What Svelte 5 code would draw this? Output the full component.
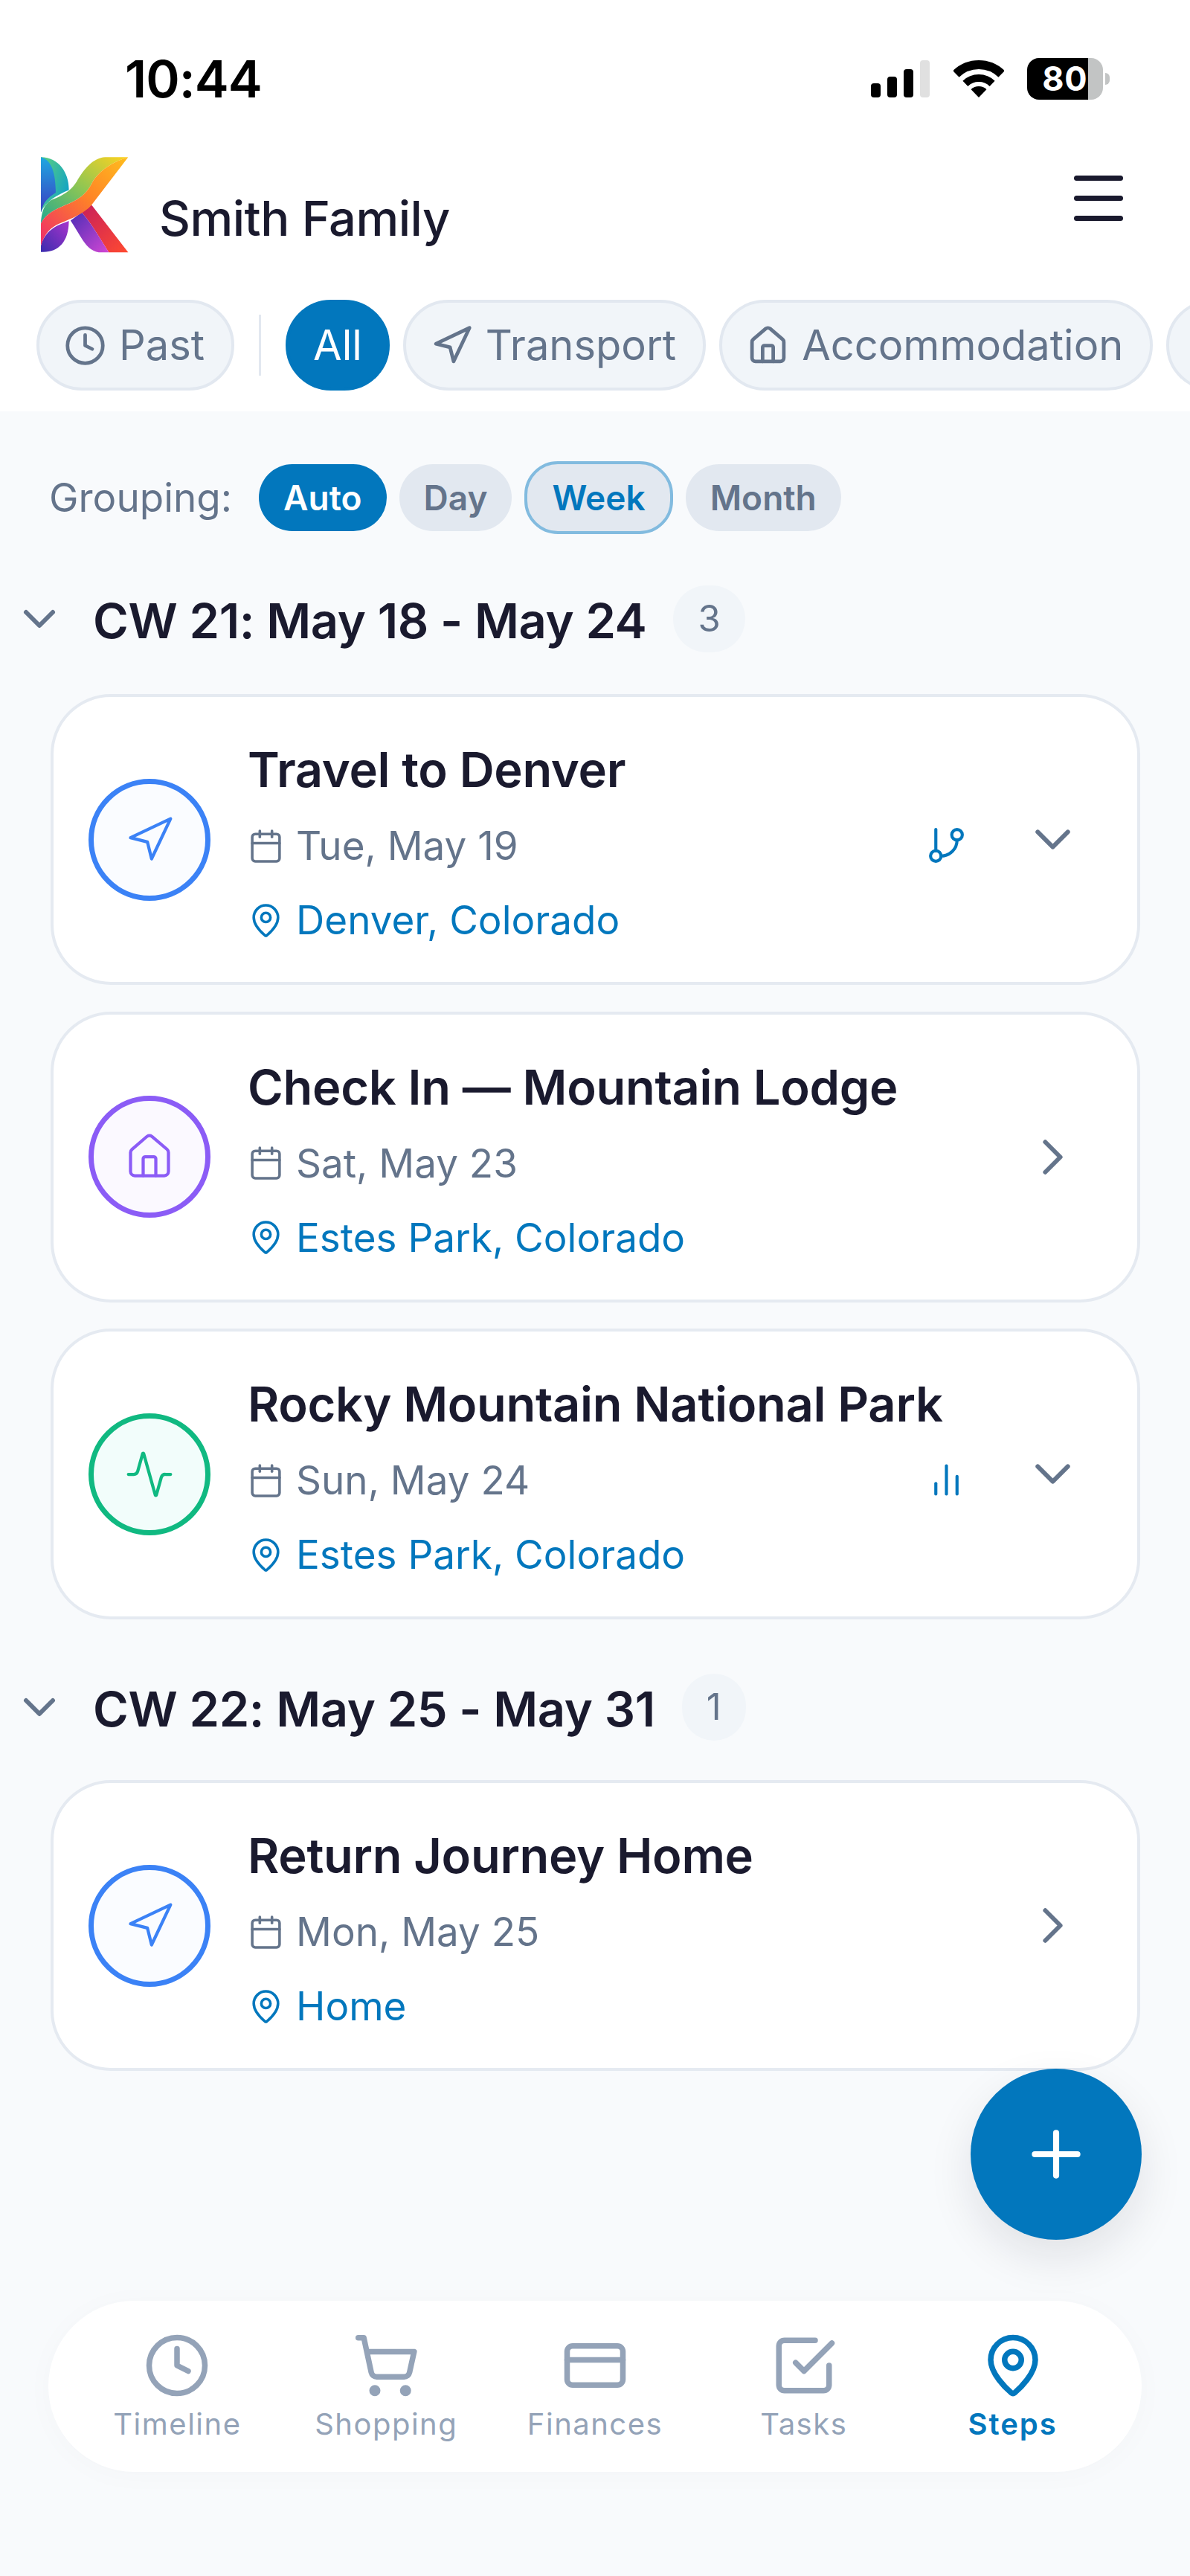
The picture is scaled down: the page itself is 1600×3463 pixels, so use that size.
<script>
  const ic = {
    clock: '<circle cx="12" cy="12" r="10"/><polyline points="12 6 12 12 16 14"/>',
    nav: '<polygon points="3 11 22 2 13 21 11 13 3 11"/>',
    house: '<path d="M15 21v-8a1 1 0 0 0-1-1h-4a1 1 0 0 0-1 1v8"/><path d="M3 10a2 2 0 0 1 .709-1.528l7-5.999a2 2 0 0 1 2.582 0l7 5.999A2 2 0 0 1 21 10v9a2 2 0 0 1-2 2H5a2 2 0 0 1-2-2z"/>',
    calendar: '<path d="M8 2v4"/><path d="M16 2v4"/><rect x="3" y="4" width="18" height="18" rx="2"/><path d="M3 10h18"/>',
    pin: '<path d="M20 10c0 4.993-5.539 10.193-7.399 11.799a1 1 0 0 1-1.202 0C9.539 20.193 4 14.993 4 10a8 8 0 0 1 16 0"/><circle cx="12" cy="10" r="3"/>',
    branch: '<line x1="6" x2="6" y1="3" y2="15"/><circle cx="18" cy="6" r="3"/><circle cx="6" cy="18" r="3"/><path d="M18 9a9 9 0 0 1-9 9"/>',
    bars: '<line x1="18" x2="18" y1="20" y2="10"/><line x1="12" x2="12" y1="20" y2="4"/><line x1="6" x2="6" y1="20" y2="14"/>',
    activity: '<path d="M22 12h-2.48a2 2 0 0 0-1.93 1.46l-2.35 8.36a.25.25 0 0 1-.48 0L9.24 2.18a.25.25 0 0 0-.48 0l-2.35 8.36A2 2 0 0 1 4.49 12H2"/>',
    down: '<path d="m6 9 6 6 6-6"/>',
    right: '<path d="m9 18 6-6-6-6"/>',
    plus: '<path d="M5 12h14"/><path d="M12 5v14"/>',
    cart: '<circle cx="8" cy="21" r="1"/><circle cx="19" cy="21" r="1"/><path d="M2.05 2.05h2l2.66 12.42a2 2 0 0 0 2 1.58h9.78a2 2 0 0 0 1.95-1.57l1.65-7.43H5.12"/>',
    card: '<rect x="2" y="5" width="20" height="14" rx="2"/><line x1="2" x2="22" y1="10" y2="10"/>',
    check: '<path d="M9 11l3 3L22 4"/><path d="M21 12v7a2 2 0 0 1-2 2H5a2 2 0 0 1-2-2V5a2 2 0 0 1 2-2h11"/>'
  }

  // the last pill runs off the screen, only its left edge shows
  const filters = [
    { label: 'Transport', icon: 'nav' },
    { label: 'Accommodation', icon: 'house' },
    { label: '', icon: 'activity' }
  ]

  const groupings = ['Auto', 'Day', 'Week', 'Month']

  const sections = [
    {
      title: 'CW 21: May 18 - May 24',
      count: 3,
      steps: [
        { title: 'Travel to Denver', date: 'Tue, May 19', place: 'Denver, Colorado', icon: 'nav', tone: 'blue', extra: 'branch', open: true },
        { title: 'Check In — Mountain Lodge', date: 'Sat, May 23', place: 'Estes Park, Colorado', icon: 'house', tone: 'purple' },
        { title: 'Rocky Mountain National Park', date: 'Sun, May 24', place: 'Estes Park, Colorado', icon: 'activity', tone: 'green', extra: 'bars', open: true }
      ]
    },
    {
      title: 'CW 22: May 25 - May 31',
      count: 1,
      steps: [
        { title: 'Return Journey Home', date: 'Mon, May 25', place: 'Home', icon: 'nav', tone: 'blue' }
      ]
    }
  ]

  const tabs = [
    { label: 'Timeline', icon: 'clock' },
    { label: 'Shopping', icon: 'cart' },
    { label: 'Finances', icon: 'card' },
    { label: 'Tasks', icon: 'check' },
    { label: 'Steps', icon: 'pin', active: true }
  ]
</script>

{#snippet icon(name, size, sw = 2)}
  <svg class="ico" width={size} height={size} viewBox="0 0 24 24" fill="none" stroke="currentColor" stroke-width={sw} stroke-linecap="round" stroke-linejoin="round">{@html ic[name]}</svg>
{/snippet}

<div class="page">
  <header class="top">
    <div class="status">
      <span class="time">10:44</span>
      <div class="signal"><i class="b1"></i><i class="b2"></i><i class="b3"></i><i class="b4"></i></div>
      <svg class="wifi" width="68" height="50" viewBox="0 0 68 50">
        <path d="M3.4 18.4A44 44 0 0 1 64.6 18.4" fill="none" stroke="#000" stroke-width="12" />
        <path d="M15.9 31.3A26 26 0 0 1 52.1 31.3" fill="none" stroke="#000" stroke-width="10" />
        <path d="M23.6 39.2A15 15 0 0 1 44.4 39.2L34 50Z" fill="#000" />
      </svg>
      <div class="battery"><span class="level">80</span><span class="rest"></span></div>
      <span class="nub"></span>
    </div>

    <div class="brand">
      <svg class="logo" width="122" height="133" viewBox="70 55 365 400">
        <defs>
          <linearGradient id="k1" x1="0" y1="0" x2="1" y2="0.6"><stop offset="0" stop-color="#5fd27c" /><stop offset="1" stop-color="#12a3c4" /></linearGradient>
          <linearGradient id="k2" x1="0" y1="0" x2="0" y2="1"><stop offset="0" stop-color="#1fa8e0" /><stop offset="1" stop-color="#3a3ec2" /></linearGradient>
          <linearGradient id="k3" x1="0" y1="1" x2="1" y2="0"><stop offset="0" stop-color="#22a890" /><stop offset="0.5" stop-color="#8ec653" /><stop offset="1" stop-color="#ffd21f" /></linearGradient>
          <linearGradient id="k4" x1="0" y1="1" x2="1" y2="0"><stop offset="0" stop-color="#ee2c6a" /><stop offset="0.55" stop-color="#ff8426" /><stop offset="1" stop-color="#ffbe1e" /></linearGradient>
          <linearGradient id="k5" x1="0" y1="1" x2="1" y2="0"><stop offset="0" stop-color="#3a2cae" /><stop offset="1" stop-color="#a834cc" /></linearGradient>
          <linearGradient id="k6" x1="0" y1="0" x2="1" y2="1"><stop offset="0" stop-color="#4c2db6" /><stop offset="1" stop-color="#d247d4" /></linearGradient>
          <linearGradient id="k7" x1="0" y1="0" x2="1" y2="1"><stop offset="0" stop-color="#c81f5c" /><stop offset="1" stop-color="#ff4a30" /></linearGradient>
        </defs>
        <path d="M75 62C150 62 190 130 188 195C140 215 95 240 75 285Z" fill="url(#k1)" />
        <path d="M75 62C110 70 135 110 135 205C105 225 85 240 75 285Z" fill="url(#k2)" />
        <path d="M75 445C140 450 188 410 188 320C150 335 95 350 75 420Z" fill="url(#k5)" />
        <path d="M240 285L280 255L428 447H350C320 400 280 330 240 285Z" fill="url(#k7)" />
        <path d="M195 318L240 285C280 330 320 400 350 447H320C260 447 240 385 195 318Z" fill="url(#k6)" />
        <path d="M428 62H335C285 65 250 110 220 160C195 200 165 215 125 232C95 245 78 270 75 330C95 290 130 275 175 255C225 235 255 215 280 170C300 130 350 85 428 62Z" fill="url(#k3)" />
        <path d="M428 62C350 85 300 130 280 170C255 215 225 235 175 255C130 275 95 290 75 330V420C90 370 115 345 150 330C200 310 250 290 280 255Z" fill="url(#k4)" />
      </svg>
      <span class="family">Smith Family</span>
      <div class="burger"><i></i><i></i><i></i></div>
    </div>

    <div class="filters">
      <span class="pill">{@render icon('clock', 57)}Past</span>
      <span class="sep"></span>
      <span class="pill on">All</span>
      {#each filters as f}
        <span class="pill">{@render icon(f.icon, 57)}{f.label}</span>
      {/each}
    </div>
  </header>

  <main class="content">
    <div class="grouping">
      <span class="glabel">Grouping:</span>
      {#each groupings as g}
        <span class="gpill" class:auto={g === 'Auto'} class:week={g === 'Week'}>{g}</span>
      {/each}
    </div>

    {#each sections as s}
      <section class="section">
        <div class="shead">
          <span class="schev">{@render icon('down', 72, 2)}</span>
          <h2>{s.title}</h2>
          <span class="count">{s.count}</span>
        </div>
        <div class="cards">
          {#each s.steps as st}
            <article class="card">
              <div class="disc {st.tone}">{@render icon(st.icon, 68, 1.5)}</div>
              <div class="body">
                <div class="title">{st.title}</div>
                <div class="row date">{@render icon('calendar', 49, 1.75)}<span>{st.date}</span></div>
                <div class="row place">{@render icon('pin', 49, 1.75)}<span>{st.place}</span></div>
              </div>
              <div class="actions">
                {#if st.extra}
                  <span class="extra">{@render icon(st.extra, 57, 1.75)}</span>
                {/if}
                <span class="chev">{@render icon(st.open ? 'down' : 'right', 81, 1.75)}</span>
              </div>
            </article>
          {/each}
        </div>
      </section>
    {/each}

    <button class="fab" aria-label="Add">{@render icon('plus', 98, 2)}</button>

    <nav class="tabs">
      {#each tabs as t}
        <div class="tab" class:active={t.active}>
          {@render icon(t.icon, 90, 2)}
          <span>{t.label}</span>
        </div>
      {/each}
    </nav>
  </main>
</div>

<style>
  :global(body) {
    margin: 0;
    background: #f8fafc;
  }

  .page {
    width: 1600px;
    height: 3463px;
    display: flex;
    flex-direction: column;
    overflow: hidden;
    font-family: Inter, "Liberation Sans", sans-serif;
    color: #1a1a2e;
  }

  .ico {
    display: block;
    flex: none;
  }

  .top {
    background: #fff;
    height: 553px;
    box-sizing: border-box;
  }

  .status {
    height: 211px;
    display: flex;
    align-items: center;
  }

  .time {
    margin-left: 168px;
    font-size: 69px;
    font-weight: 600;
    color: #000;
    letter-spacing: -1px;
    margin-right: auto;
  }

  .signal {
    display: flex;
    align-items: flex-end;
    gap: 9px;
    height: 50px;
  }
  .signal i {
    width: 13px;
    background: #000;
    border-radius: 4px;
  }
  .signal .b1 { height: 19px; }
  .signal .b2 { height: 28px; }
  .signal .b3 { height: 38px; }
  .signal .b4 { height: 50px; background: #e0e0e0; }

  .wifi {
    margin-left: 32px;
    margin-right: 31px;
  }

  .battery {
    width: 102px;
    height: 56px;
    border-radius: 16px;
    overflow: hidden;
    display: flex;
  }
  .level {
    width: 82px;
    background: #000;
    color: #fff;
    font-size: 45px;
    font-weight: 700;
    line-height: 56px;
    text-align: right;
    padding-right: 1px;
    box-sizing: border-box;
    letter-spacing: 0.5px;
  }
  .rest {
    flex: 1;
    background: #c2c4c4;
  }
  .nub {
    width: 6px;
    height: 16px;
    margin-left: 3px;
    margin-right: 108px;
    background: #c2c4c4;
    border-radius: 0 8px 8px 0;
  }

  .brand {
    height: 192px;
    display: flex;
    align-items: flex-start;
    box-sizing: border-box;
    padding-left: 53px;
  }
  .logo {
    margin-top: -2px;
  }
  .family {
    margin-left: 39px;
    margin-top: 44px;
    font-size: 65px;
    font-weight: 500;
    line-height: 78px;
    letter-spacing: -0.5px;
    color: #1a1a2e;
  }
  .burger {
    margin-left: auto;
    margin-right: 90px;
    margin-top: 25px;
    display: flex;
    flex-direction: column;
    gap: 20px;
  }
  .burger i {
    display: block;
    width: 66px;
    height: 7px;
    border-radius: 4px;
    background: #1a1a2e;
  }

  .filters {
    display: flex;
    align-items: center;
    gap: 18px;
    padding-left: 49px;
    height: 122px;
    width: 1600px;
    box-sizing: border-box;
    overflow: hidden;
  }
  .pill {
    flex: none;
    height: 122px;
    box-sizing: border-box;
    display: flex;
    align-items: center;
    gap: 17px;
    padding: 0 36px 0 33px;
    border: 4px solid #e2e8f0;
    border-radius: 61px;
    background: #f1f5f9;
    color: #64748b;
    font-size: 56px;
    white-space: nowrap;
  }
  .pill.on {
    background: #0277bd;
    border-color: #0277bd;
    color: #fff;
    padding: 0 33px;
  }
  .sep {
    flex: none;
    width: 3px;
    height: 82px;
    margin: 0 15px;
    background: #e2e8f0;
  }

  .content {
    flex: 1;
    display: flex;
    flex-direction: column;
    position: relative;
  }

  .grouping {
    display: flex;
    align-items: center;
    gap: 17px;
    height: 98px;
    margin-top: 67px;
    padding-left: 66px;
  }
  .glabel {
    font-size: 53px;
    color: #64748b;
    margin-right: 19px;
  }
  .gpill {
    height: 90px;
    line-height: 90px;
    padding: 0 33px;
    border-radius: 45px;
    background: #e2e8f0;
    color: #64748b;
    font-size: 46px;
    font-weight: 600;
  }
  .gpill.auto {
    background: #0277bd;
    color: #fff;
  }
  .gpill.week {
    height: 98px;
    line-height: 90px;
    box-sizing: border-box;
    border: 4px solid #82bbdf;
    color: #0277bd;
  }

  .section {
    margin-top: 69px;
  }
  .section + .section {
    margin-top: 73px;
  }

  .shead {
    display: flex;
    align-items: center;
    height: 90px;
    padding-left: 17px;
    margin-bottom: 56px;
  }
  .section + .section .shead {
    margin-bottom: 53px;
  }
  .schev {
    color: #64748b;
    margin-right: 36px;
  }
  h2 {
    margin: 6px 0 0;
    font-size: 65px;
    font-weight: 600;
    line-height: 78px;
    letter-spacing: -0.35px;
    color: #1a1a2e;
  }
  .count {
    margin-left: 36px;
    padding: 0 33px;
    height: 90px;
    border-radius: 45px;
    background: #f1f5f9;
    color: #64748b;
    font-size: 49px;
    line-height: 90px;
    text-align: center;
  }

  .cards {
    display: flex;
    flex-direction: column;
    gap: 35.5px;
    margin: 0 67px 0 68px;
  }
  .card {
    height: 391px;
    box-sizing: border-box;
    display: flex;
    align-items: center;
    padding: 0 73px 0 47px;
    border: 4px solid #e5eaf1;
    border-radius: 81px;
    background: #fff;
  }
  .disc {
    width: 164px;
    height: 164px;
    box-sizing: border-box;
    border: 7px solid;
    border-radius: 50%;
    display: flex;
    align-items: center;
    justify-content: center;
    flex: none;
  }
  .disc.blue { color: #3b82f6; background: #fafcff; }
  .disc.purple { color: #8b5cf6; background: #fbf9ff; }
  .disc.green { color: #10b981; background: #f2fdfb; }

  .body {
    flex: 1;
    min-width: 0;
    margin-left: 50px;
    padding-top: 17px;
  }
  .title {
    height: 100px;
    line-height: 96px;
    font-size: 65px;
    font-weight: 600;
    letter-spacing: -0.3px;
    color: #1a1a2e;
    white-space: nowrap;
  }
  .row {
    height: 100px;
    display: flex;
    align-items: center;
    gap: 16px;
    font-size: 53px;
  }
  .date { color: #64748b; }
  .place { color: #0277bd; }

  .actions {
    flex: none;
    display: flex;
    align-items: center;
    gap: 74px;
  }
  .extra {
    color: #0277bd;
    margin-top: 15px;
  }
  .chev {
    color: #64748b;
  }

  .fab {
    position: absolute;
    right: 65px;
    bottom: 452px;
    width: 230px;
    height: 230px;
    padding: 0;
    border: 0;
    border-radius: 50%;
    background: #0277bd;
    color: #fff;
    display: flex;
    align-items: center;
    justify-content: center;
    box-shadow: 0 24px 60px rgba(15, 23, 42, 0.1);
  }

  .tabs {
    margin: auto 65px 140px;
    height: 230px;
    box-sizing: border-box;
    padding: 42px 33px 0;
    display: grid;
    grid-template-columns: repeat(5, 1fr);
    border-radius: 115px;
    background: #fff;
    box-shadow: 0 4px 40px rgba(15, 23, 42, 0.025);
  }
  .tab {
    display: flex;
    flex-direction: column;
    align-items: center;
    color: #94a3b8;
    font-size: 40px;
    letter-spacing: 1.5px;
    line-height: 56px;
  }
  .tab span {
    margin-top: 6px;
  }
  .tab.active {
    color: #0277bd;
    font-weight: 600;
    letter-spacing: 2px;
  }
</style>
